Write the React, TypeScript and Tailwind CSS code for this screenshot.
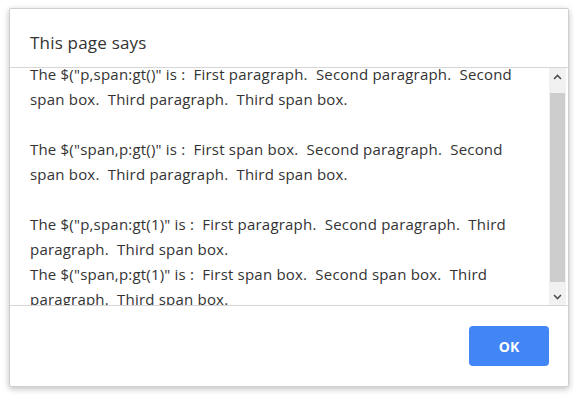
import React from "react";

const lines: string[] = [
  'The $("p,span:gt()" is :  First paragraph.  Second paragraph.  Second',
  "span box.  Third paragraph.  Third span box.",
  "",
  'The $("span,p:gt()" is :  First span box.  Second paragraph.  Second',
  "span box.  Third paragraph.  Third span box.",
  "",
  'The $("p,span:gt(1)" is :  First paragraph.  Second paragraph.  Third',
  "paragraph.  Third span box.",
  'The $("span,p:gt(1)" is :  First span box.  Second span box.  Third',
  "paragraph.  Third span box.",
];

export default function App() {
  return (
    <div className="w-[574px] h-[396px] bg-white pt-[8px] pl-[9px]" style={{ fontFamily: '"Open Sans", "Noto Sans", sans-serif' }}>
      <div className="w-[560px] h-[379px] bg-white border border-[#cfcfcf] rounded-[2px] shadow-[0_2px_6px_rgba(0,0,0,0.25)] flex flex-col">
        <div className="h-[58px] flex items-center pl-[20px] pt-[9px] text-[17px] tracking-[0.2px] text-[#333]">This page says</div>
        <div className="h-[239px] border-y border-[#d6d6d6] flex overflow-hidden">
          <div className="flex-1 pl-[20px] overflow-hidden">
            <div className="-mt-[6px] text-[15px] tracking-[0.2px] leading-[25px] text-[#333]">
              {lines.map((l, i) => (
                <div key={i} className="whitespace-pre h-[25px]">{l}</div>
              ))}
            </div>
          </div>
          <div className="w-[17px] bg-[#f1f1f1] flex flex-col items-center">
            <div className="h-[17px] w-full flex items-center justify-center">
              <svg width="9" height="6" viewBox="0 0 9 6"><path d="M1 5 L4.5 1.5 L8 5" fill="none" stroke="#505050" strokeWidth="1.6" /></svg>
            </div>
            <div className="mt-[8px] h-[189px] w-[15px] bg-[#cdcdcd]" />
            <div className="flex-1" />
            <div className="h-[17px] w-full flex items-center justify-center">
              <svg width="9" height="6" viewBox="0 0 9 6"><path d="M1 1 L4.5 4.5 L8 1" fill="none" stroke="#505050" strokeWidth="1.6" /></svg>
            </div>
          </div>
          <div className="w-[2px]" />
        </div>
        <div className="flex-1 flex justify-end items-start pt-[20px] pr-[19px]">
          <button className="w-[80px] h-[40px] rounded-[4px] bg-[#4285f4] text-white text-[14px] font-bold">OK</button>
        </div>
      </div>
    </div>
  );
}
